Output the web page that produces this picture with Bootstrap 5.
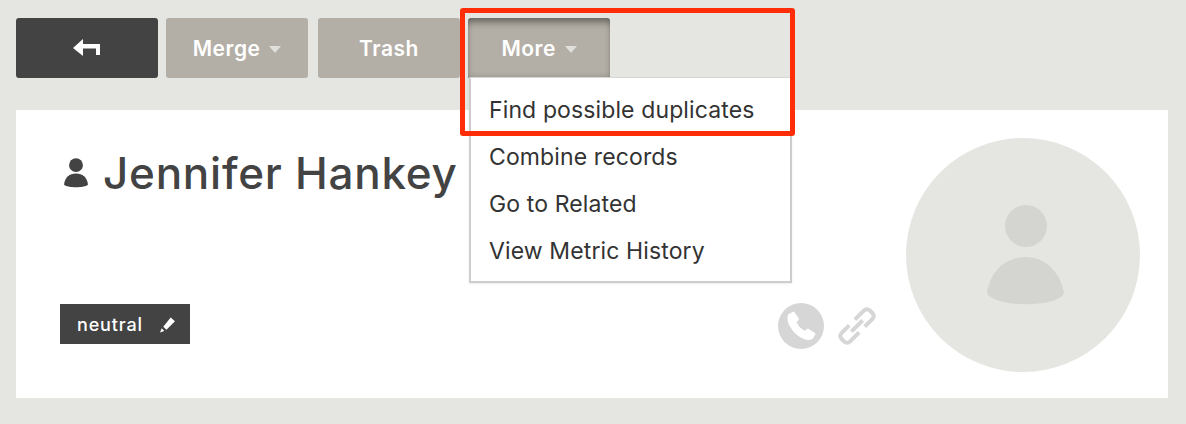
<!DOCTYPE html>
<html lang="en">
<head>
  <meta charset="UTF-8">
  <meta name="viewport" content="width=device-width, initial-scale=1">
  <title>Jennifer Hankey</title>
  <link href="https://cdn.jsdelivr.net/npm/bootstrap@5.3.0/dist/css/bootstrap.min.css" rel="stylesheet">
  <style>
    body {
      font-family: "Inter", "Lato", sans-serif;
      background-color: #e5e6e1;
      color: #434343;
      height: 424px;
      overflow: hidden;
    }
    .page-wrap { padding: 18px 18px 0 16px; position: relative; }
    .action-bar { height: 60px; margin-bottom: 32px; }
    .act-btn {
      width: 142px;
      height: 60px;
      border: 0;
      border-radius: 3px;
      background: #b3aea6;
      color: #fff;
      font-size: 21px;
      font-weight: 600;
      letter-spacing: .5px;
      padding: 2px 0 0;
    }
    .act-btn:hover, .act-btn:active { background: #b3aea6 !important; color: #fff !important; }
    .act-back { background: #434343; padding: 0; }
    .act-back:hover { background: #434343 !important; }
    .act-trash { margin: 0 8px 0 10px; }
    .act-open {
      border-radius: 3px 3px 0 0;
      box-shadow: inset 0 6px 7px -2px rgba(70, 68, 62, .7), inset 0 -4px 4px -2px rgba(70, 68, 62, .2);
    }
    .caret-down {
      display: inline-block;
      width: 0;
      height: 0;
      margin-left: 3px;
      vertical-align: 3px;
      border-left: 6px solid transparent;
      border-right: 6px solid transparent;
      border-top: 7px solid rgba(255, 255, 255, .6);
    }
    .more-menu {
      position: absolute;
      left: 469px;
      top: 77px;
      width: 323px;
      height: 206px;
      padding: 8px 0 0;
      margin: 0;
      border: 2px solid #cdcdcd;
      border-top: 1px solid #d6d6d3;
      border-radius: 0;
      background: #fff;
      box-shadow: 0 1px 2px rgba(0, 0, 0, .08);
      z-index: 10;
      display: block;
    }
    .more-menu .dropdown-item {
      font-size: 23px;
      font-weight: 400;
      line-height: 30px;
      height: 47px;
      padding: 9px 18px 0;
      color: #333;
      letter-spacing: .12px;
    }
    .profile-card {
      height: 288px;
      width: 1152px;
      border: 0;
      border-radius: 0;
      padding: 28px 28px 26px 48px;
    }
    .person-name {
      font-size: 44px;
      font-weight: 500;
      line-height: 1;
      margin: 13px 0 0;
      color: #434343;
      letter-spacing: .75px;
      gap: 15px;
    }
    .mood-tag {
      width: 130px;
      height: 40px;
      margin-left: -4px;
      background: #434343;
      color: #fff;
      font-size: 18px;
      font-weight: 500;
      letter-spacing: .85px;
      padding-left: 17px;
      border-radius: 0;
      margin-bottom: 28px;
    }
    .avatar-ring {
      width: 234px;
      height: 234px;
      border-radius: 50%;
      background: #e5e6e1;
    }
    .avatar-ring svg { margin-left: 4px; }
    .contact-icons { margin-bottom: 23px; margin-right: 6px; gap: 14px; }
    .note-box {
      position: absolute;
      left: 460px;
      top: 8px;
      width: 335px;
      height: 128px;
      border: 5px solid #ff2d08;
      border-radius: 3px;
      z-index: 20;
      pointer-events: none;
    }
  </style>
</head>
<body>
  <div class="page-wrap">
    <div class="d-flex action-bar">
      <button type="button" class="btn act-btn act-back d-flex align-items-center justify-content-center me-2">
        <svg width="28" height="18" viewBox="0 0 28 18"><path d="M0 9 L10 0 V5 H27 V16 H23 V9.500 H10 V17 Z" fill="#fff"/></svg>
      </button>
      <button type="button" class="btn act-btn">Merge <span class="caret-down"></span></button>
      <button type="button" class="btn act-btn act-trash">Trash</button>
      <button type="button" class="btn act-btn act-open">More <span class="caret-down"></span></button>
    </div>

    <ul class="dropdown-menu more-menu">
      <li><a class="dropdown-item" href="#">Find possible duplicates</a></li>
      <li><a class="dropdown-item" href="#">Combine records</a></li>
      <li><a class="dropdown-item" href="#">Go to Related</a></li>
      <li><a class="dropdown-item" href="#">View Metric History</a></li>
    </ul>

    <div class="note-box"></div>

    <div class="card profile-card d-flex flex-row justify-content-between">
      <div class="d-flex flex-column justify-content-between flex-grow-1">
        <h1 class="person-name d-flex align-items-center">
          <svg width="24" height="32" viewBox="0 0 26 33"><circle cx="13" cy="8" r="7.500" fill="#434343"/><path d="M0 29 C1 21 6 17 13 17 C20 17 25 21 26 29 C23 33 3 33 0 29 Z" fill="#434343"/></svg>
          Jennifer Hankey
        </h1>
        <div class="d-flex justify-content-between align-items-end pe-4">
          <span class="mood-tag d-flex align-items-center gap-3">neutral
            <svg width="17" height="17" viewBox="0 0 16 16"><path d="M4 10 L11 1.500 L15 5 L7 13 Z M2.500 11.500 L5 14 L1 15.500 Z" fill="#fff"/></svg>
          </span>
          <div class="d-flex align-items-center contact-icons">
            <svg width="46" height="46" viewBox="0 0 46 46"><circle cx="23" cy="23" r="23" fill="#d5d6d5"/><path d="M11 12 L15.500 9.500 L20 16 L17.500 19 C19 23 23 27 27 29 L30 26.500 L36.500 31 L34 35 C31 37 26 36 20 31.500 C13 26 9 18 11 12 Z" fill="#fff" stroke="#fff" stroke-width="2" stroke-linejoin="round"/></svg>
            <svg width="38" height="38" viewBox="0 0 38 38" fill="none" stroke="#d5d6d5" stroke-width="4"><g transform="rotate(-45 19 19)"><path d="M14 13 H3 a4 4 0 0 0 -4 4 v4 a4 4 0 0 0 4 4 H16"/><path d="M22 13 H35 a4 4 0 0 1 4 4 v4 a4 4 0 0 1 -4 4 H24"/><path d="M11 19 H27"/></g></svg>
          </div>
        </div>
      </div>
      <div class="avatar-ring d-flex align-items-center justify-content-center flex-shrink-0">
        <svg width="78" height="100" viewBox="0 0 78 100"><circle cx="40" cy="21" r="21" fill="#d4d4d0"/><path d="M1 88 C4 66 20 52 40 52 C58 52 74 66 78 88 C72 103 8 103 1 88 Z" fill="#d4d4d0"/></svg>
      </div>
    </div>
  </div>
</body>
</html>
